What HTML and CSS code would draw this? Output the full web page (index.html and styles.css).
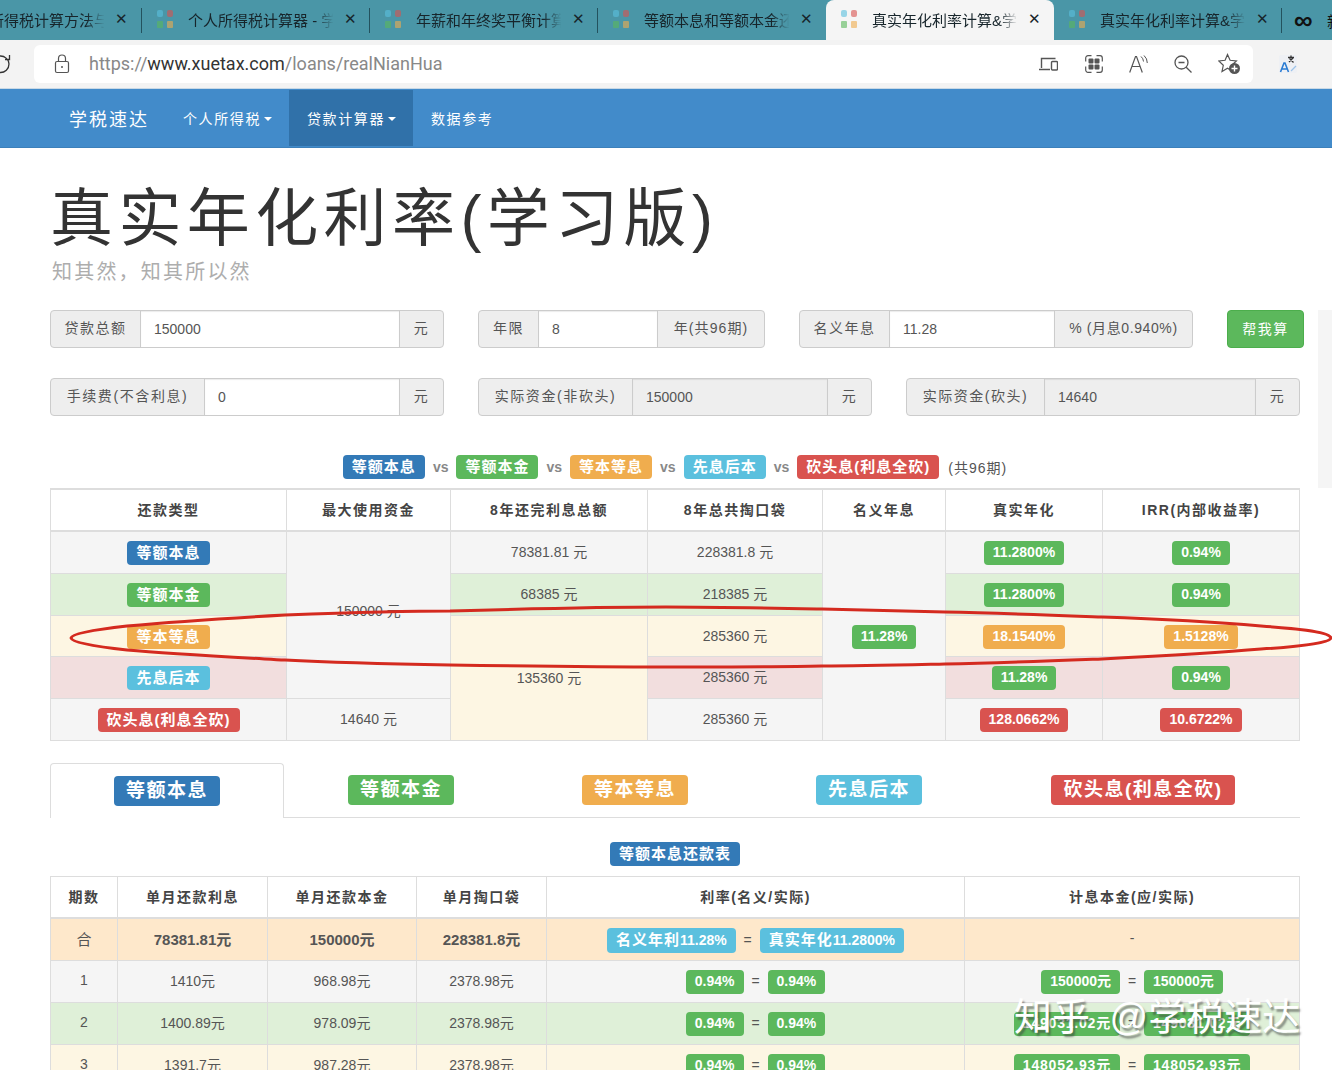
FILE: index.html
```html
<!DOCTYPE html>
<html>
<head>
    <title>真实年化利率计算&学习版 - 学税速达</title>
    <link rel="stylesheet" href="styles.css">
</head>
<body>
    <svg width="0" height="0" class="defs">
        <symbol id="fav" viewBox="0 0 20 20">
            <rect x="2" y="1" width="6" height="7" rx="2" fill="#5bc0de"/>
            <rect x="12" y="1" width="6" height="7" rx="2" fill="#d9534f"/>
            <rect x="2" y="12" width="6" height="7" rx="1" fill="#5cb85c"/>
            <rect x="12" y="12" width="6" height="7" rx="1" fill="#f0ad4e"/>
        </symbol>
    </svg>

    <div class="tabstrip">
        <div class="tab tab-first"><span class="tab-title">个人所得税计算方法与</span><span class="tab-x">✕</span></div>
        <div class="tab"><svg class="fav"><use href="#fav"/></svg><span class="tab-title">个人所得税计算器 - 学</span><span class="tab-x">✕</span></div>
        <div class="tab"><svg class="fav"><use href="#fav"/></svg><span class="tab-title">年薪和年终奖平衡计算</span><span class="tab-x">✕</span></div>
        <div class="tab tab-noline"><svg class="fav"><use href="#fav"/></svg><span class="tab-title">等额本息和等额本金还</span><span class="tab-x">✕</span></div>
        <div class="tab tab-active"><svg class="fav"><use href="#fav"/></svg><span class="tab-title">真实年化利率计算&amp;学</span><span class="tab-x">✕</span></div>
        <div class="tab"><svg class="fav"><use href="#fav"/></svg><span class="tab-title">真实年化利率计算&amp;学</span><span class="tab-x">✕</span></div>
        <div class="tab-more"><span class="infinity">∞</span><span class="tab-new">新</span></div>
    </div>

    <div class="addrbar">
        <svg class="reload" width="11" height="22" viewBox="0 0 11 22"><path d="M0 3a8.500 8.500 0 0 1 9 8a8.500 8.500 0 0 1-9 8.500M9.500 2v4.500h-4.500" fill="none" stroke="#333" stroke-width="1.300"/></svg>
        <div class="urlbox">
            <svg class="lock" width="16" height="20" viewBox="0 0 16 20"><path d="M4.500 7.500v-3a3.500 3.500 0 0 1 7 0v3" fill="none" stroke="#555" stroke-width="1.200"/><rect x="1.500" y="7.500" width="13" height="11" rx="1.500" fill="none" stroke="#555" stroke-width="1.200"/><circle cx="8" cy="13" r="1" fill="#555"/></svg>
            <span class="url"><span class="url-dim">https://</span>www.xuetax.com<span class="url-dim">/loans/realNianHua</span></span>
            <div class="url-icons">
                <svg class="icon-devices" width="19" height="14" viewBox="0 0 19 14"><path d="M2.500 11V1.500h14M0 12.500h11" fill="none" stroke="#555" stroke-width="1.400"/><rect x="12.500" y="4.500" width="6" height="8.500" rx="1" fill="none" stroke="#555" stroke-width="1.400"/></svg>
                <svg width="18" height="18" viewBox="0 0 18 18"><path d="M0.700 6.500V3a2.300 2.300 0 0 1 2.300-2.300h3.500M11.500 0.700H15a2.300 2.300 0 0 1 2.300 2.300v3.500M17.300 11.500V15a2.300 2.300 0 0 1-2.300 2.300h-3.500M6.500 17.300H3a2.300 2.300 0 0 1-2.300-2.300v-3.500" fill="none" stroke="#555" stroke-width="1.200"/><rect x="3.500" y="3.500" width="5" height="5" rx="1" fill="#555"/><rect x="9.500" y="3.500" width="5" height="5" rx="1" fill="#555"/><rect x="3.500" y="9.500" width="5" height="5" rx="1" fill="#555"/><rect x="9.500" y="9.500" width="5" height="5" rx="1" fill="#555"/></svg>
                <svg width="19" height="18" viewBox="0 0 19 18"><path d="M0.700 17.500L6.500 1.500h1L13.300 17.500M3 11.500h8" fill="none" stroke="#555" stroke-width="1.200"/><path d="M12 1.500a7 7 0 0 1 2.500 5M15 0.500a10 10 0 0 1 3.300 7.500" fill="none" stroke="#555" stroke-width="1"/></svg>
                <svg width="18" height="18" viewBox="0 0 18 18"><circle cx="7.500" cy="7.500" r="6.500" fill="none" stroke="#555" stroke-width="1.300"/><path d="M4.500 7.500h6M12.200 12.200l5.300 5.300" fill="none" stroke="#555" stroke-width="1.300"/></svg>
                <svg width="22" height="21" viewBox="0 0 22 21"><path d="M9.500 1.500l2.600 5.800 6.300.7-4.700 4.300 1.300 6.200-5.500-3.200-5.500 3.200 1.300-6.200L0.800 8l6.300-.7z" fill="none" stroke="#555" stroke-width="1.200"/><circle cx="16.500" cy="15.500" r="5.500" fill="#555"/><path d="M16.500 12.500v6M13.500 15.500h6" stroke="#fff" stroke-width="1.400"/></svg>
            </div>
        </div>
        <svg class="translate" width="18" height="20" viewBox="0 0 18 20"><rect x="0" y="1" width="18" height="18" rx="2" fill="#eef0f4"/><path d="M1.500 18L5 9h1L9.500 18M3 15h5" fill="none" stroke="#2b7cd3" stroke-width="1.600"/><path d="M9 3.500h6M12 1.500v2M10 8l4-4M10.500 4.500l4 4" fill="none" stroke="#333" stroke-width="1.300"/><path d="M12 17l5-5" stroke="#9cc3ea" stroke-width="1.300"/></svg>
    </div>

    <nav class="navbar">
        <a class="brand">学税速达</a>
        <a class="nav-item nav-first">个人所得税<i class="caret"></i></a>
        <a class="nav-item nav-active">贷款计算器<i class="caret"></i></a>
        <a class="nav-item">数据参考</a>
    </nav>

    <div class="container">
        <h1 class="title">真实年化利率(学习版)</h1>
        <p class="subtitle">知其然，知其所以然</p>

        <div class="input-row">
            <div class="input-group g-wide">
                <span class="addon a-91">贷款总额</span><span class="field">150000</span><span class="addon a-45">元</span>
            </div>
            <div class="input-group g-year">
                <span class="addon a-60">年限</span><span class="field">8</span><span class="addon a-108">年(共96期)</span>
            </div>
            <div class="input-group g-wide">
                <span class="addon a-91">名义年息</span><span class="field">11.28</span><span class="addon a-139">% (月息0.940%)</span>
            </div>
            <button class="calc-btn">帮我算</button>
        </div>
        <div class="input-row row-two">
            <div class="input-group g-wide">
                <span class="addon a-154">手续费(不含利息)</span><span class="field">0</span><span class="addon a-45">元</span>
            </div>
            <div class="input-group g-wide">
                <span class="addon a-154">实际资金(非砍头)</span><span class="field field-off">150000</span><span class="addon a-45">元</span>
            </div>
            <div class="input-group g-wide">
                <span class="addon a-138">实际资金(砍头)</span><span class="field field-off">14640</span><span class="addon a-45">元</span>
            </div>
        </div>

        <div class="legend">
            <span class="label blue">等额本息</span><b>vs</b>
            <span class="label green">等额本金</span><b>vs</b>
            <span class="label orange">等本等息</span><b>vs</b>
            <span class="label cyan">先息后本</span><b>vs</b>
            <span class="label red">砍头息(利息全砍)</span>
            <span class="legend-note">(共96期)</span>
        </div>

        <div class="compare">
            <table class="grid grid-top">
                <colgroup>
                    <col class="c236"><col class="c164"><col class="c197"><col class="c175"><col class="c123"><col class="c157"><col>
                </colgroup>
                <thead>
                    <tr><th>还款类型</th><th>最大使用资金</th><th>8年还完利息总额</th><th>8年总共掏口袋</th><th>名义年息</th><th>真实年化</th><th>IRR(内部收益率)</th></tr>
                </thead>
                <tbody>
                    <tr class="r-gray">
                        <td><span class="label blue">等额本息</span></td>
                        <td rowspan="4" class="bg-gray cell-up">150000 元</td>
                        <td>78381.81 元</td>
                        <td>228381.8 元</td>
                        <td rowspan="5" class="bg-gray"><span class="label green num">11.28%</span></td>
                        <td><span class="label green num">11.2800%</span></td>
                        <td><span class="label green num">0.94%</span></td>
                    </tr>
                    <tr class="r-green">
                        <td><span class="label green">等额本金</span></td>
                        <td>68385 元</td>
                        <td>218385 元</td>
                        <td><span class="label green num">11.2800%</span></td>
                        <td><span class="label green num">0.94%</span></td>
                    </tr>
                    <tr class="r-yellow">
                        <td><span class="label orange">等本等息</span></td>
                        <td rowspan="3" class="bg-yellow">135360 元</td>
                        <td>285360 元</td>
                        <td><span class="label orange num">18.1540%</span></td>
                        <td><span class="label orange num">1.5128%</span></td>
                    </tr>
                    <tr class="r-red">
                        <td><span class="label cyan">先息后本</span></td>
                        <td>285360 元</td>
                        <td><span class="label green num">11.28%</span></td>
                        <td><span class="label green num">0.94%</span></td>
                    </tr>
                    <tr class="r-gray">
                        <td><span class="label red">砍头息(利息全砍)</span></td>
                        <td>14640 元</td>
                        <td>285360 元</td>
                        <td><span class="label red num">128.0662%</span></td>
                        <td><span class="label red num">10.6722%</span></td>
                    </tr>
                </tbody>
            </table>
            <!-- hand drawn mark on top of the table -->
            <svg class="scribble" width="1332" height="80" viewBox="0 0 1332 80">
                <path d="M71 40C72 35 100 31 127 28C180 23 230 20 285 17C340 15 400 13 450 13C520 11 590 9 666 9C720 9 770 10 822 11C870 12 910 13 945 14C1000 15 1050 17 1102 19C1160 21 1215 24 1261 28C1290 30 1330 33 1331 40C1330 45 1295 49 1261 51C1215 55 1160 58 1102 61C1050 63 1000 65 945 66C900 67 860 68 822 68C780 69 720 69 666 69C590 69 520 68 450 67C390 66 340 65 285 62C230 59 170 56 127 52C100 49 72 45 71 40Z" fill="none" stroke="#d42a1f" stroke-width="3"/>
            </svg>
        </div>

        <div class="big-tabs">
            <div class="big-tab big-active"><span class="label blue">等额本息</span></div>
            <div class="big-tab"><span class="label green">等额本金</span></div>
            <div class="big-tab"><span class="label orange">等本等息</span></div>
            <div class="big-tab"><span class="label cyan">先息后本</span></div>
            <div class="big-tab"><span class="label red">砍头息(利息全砍)</span></div>
        </div>

        <div class="table-title"><span class="label blue">等额本息还款表</span></div>

        <table class="grid grid-bottom">
            <colgroup>
                <col class="c67"><col class="c150"><col class="c149"><col class="c130"><col class="c418"><col>
            </colgroup>
            <thead>
                <tr><th>期数</th><th>单月还款利息</th><th>单月还款本金</th><th>单月掏口袋</th><th>利率(名义/实际)</th><th>计息本金(应/实际)</th></tr>
            </thead>
            <tbody>
                <tr class="r-sum">
                    <td class="strong-cjk">合</td>
                    <td class="strong">78381.81元</td>
                    <td class="strong">150000元</td>
                    <td class="strong">228381.8元</td>
                    <td><span class="label cyan">名义年利<span class="digits">11.28%</span></span><i class="eq">=</i><span class="label cyan">真实年化<span class="digits">11.2800%</span></span></td>
                    <td>-</td>
                </tr>
                <tr class="r-gray">
                    <td>1</td><td>1410元</td><td>968.98元</td><td>2378.98元</td>
                    <td><span class="label green num">0.94%</span><i class="eq">=</i><span class="label green num">0.94%</span></td>
                    <td><span class="label green num">150000元</span><i class="eq">=</i><span class="label green num">150000元</span></td>
                </tr>
                <tr class="r-green">
                    <td>2</td><td>1400.89元</td><td>978.09元</td><td>2378.98元</td>
                    <td><span class="label green num">0.94%</span><i class="eq">=</i><span class="label green num">0.94%</span></td>
                    <td><span class="label green num wide">149031.02元</span><i class="eq">=</i><span class="label green num wide">149031.02元</span></td>
                </tr>
                <tr class="r-yellow">
                    <td>3</td><td>1391.7元</td><td>987.28元</td><td>2378.98元</td>
                    <td><span class="label green num">0.94%</span><i class="eq">=</i><span class="label green num">0.94%</span></td>
                    <td><span class="label green num wide">148052.93元</span><i class="eq">=</i><span class="label green num wide">148052.93元</span></td>
                </tr>
            </tbody>
        </table>
    </div>

    <div class="scroll-thumb"></div>
    <div class="watermark">知乎 @学税速达</div>
</body>
</html>
```

FILE: styles.css
```css
html, body {
    margin: 0;
    height: 1070px;
    overflow: hidden;
}
body {
    position: relative;
    font-family: "Liberation Sans", "Noto Sans CJK SC", sans-serif;
    font-size: 14px;
    color: #333;
    background: #fff;
}
.defs {
    position: absolute;
}

/* browser chrome */
.tabstrip {
    display: flex;
    height: 40px;
    background: #4a96a7;
    overflow: hidden;
}
.tab {
    flex: none;
    box-sizing: border-box;
    width: 228px;
    height: 40px;
    display: flex;
    align-items: center;
    padding: 0 0 2px 13px;
    position: relative;
    color: #17252b;
    font-size: 15px;
}
.tab::after {
    content: "";
    position: absolute;
    right: 0;
    top: 8px;
    height: 25px;
    width: 1px;
    background: #23525e;
}
.tab-first {
    margin-left: -86px;
    padding-left: 45px;
}
.tab-noline::after, .tab-active::after {
    display: none;
}
.tab-active {
    background: #f5f5f5;
    border-radius: 8px 8px 0 0;
}
.fav {
    width: 20px;
    height: 20px;
    flex: none;
    margin-right: 13px;
    opacity: .6;
}
.tab-title {
    width: 150px;
    flex: none;
    white-space: nowrap;
    overflow: hidden;
    -webkit-mask-image: linear-gradient(to right, #000 85%, transparent 97%);
    mask-image: linear-gradient(to right, #000 85%, transparent 97%);
}
.tab-x {
    margin-left: 5px;
    width: 14px;
    font-size: 15px;
    text-align: center;
}
.tab-more {
    flex: none;
    display: flex;
    align-items: center;
    padding-left: 12px;
    color: #111;
}
.infinity {
    font-size: 26px;
    font-weight: bold;
    width: 22px;
    line-height: 36px;
}
.tab-new {
    font-size: 15px;
    margin-left: 11px;
}
.addrbar {
    display: flex;
    align-items: center;
    height: 49px;
    padding-bottom: 1px;
    background: #f3f3f3;
    box-sizing: border-box;
    border-bottom: 1px solid #c9d9e6;
}
.reload {
    flex: none;
    width: 11px;
    margin-right: 23px;
}
.urlbox {
    width: 1219px;
    height: 38px;
    flex: none;
    box-sizing: border-box;
    background: #fff;
    border-radius: 6px;
    display: flex;
    align-items: center;
    padding: 0 13px 0 20px;
}
.url {
    margin-left: 19px;
    font-family: Roboto, sans-serif;
    font-size: 18px;
    color: #333;
}
.url-dim {
    color: #888;
}
.url-icons {
    margin-left: auto;
    display: flex;
    align-items: center;
    gap: 26px;
}
.icon-devices {
    margin-right: 1px;
}
.translate {
    margin-left: 26px;
    flex: none;
}

/* site nav */
.navbar {
    display: flex;
    align-items: center;
    height: 59px;
    padding: 0 0 1px 69px;
    background: #428bca;
    color: #fff;
    border-bottom: 1px solid #3c80ba;
    box-sizing: border-box;
}
.brand {
    width: 96px;
    font-size: 18px;
    letter-spacing: 2px;
}
.nav-item {
    height: 56px;
    display: flex;
    align-items: center;
    padding: 0 18px;
    letter-spacing: 1.600px;
}
.nav-first {
    padding-right: 17px;
}
.nav-active {
    background: #3071a9;
    padding-right: 17px;
}
.caret {
    width: 0;
    height: 0;
    margin-left: 3px;
    margin-top: 2px;
    border-top: 4px solid #fff;
    border-left: 4.500px solid transparent;
    border-right: 4.500px solid transparent;
}

/* page */
.container {
    padding: 0 0 0 50px;
    position: relative;
}
.title {
    margin: 31px 0 0;
    font-size: 63px;
    line-height: 79px;
    font-weight: normal;
    letter-spacing: 5.400px;
}
.subtitle {
    margin: 0;
    padding-left: 2px;
    font-size: 20px;
    line-height: 28px;
    letter-spacing: 2.200px;
    color: #adadad;
}
.input-row {
    display: flex;
    gap: 34px;
    margin-top: 24px;
}
.row-two {
    margin-top: 30px;
}
.input-group {
    flex: none;
    display: flex;
    height: 38px;
    box-sizing: border-box;
    border: 1px solid #ccc;
    border-radius: 4px;
    overflow: hidden;
    background: #eee;
    line-height: 36px;
}
.g-wide {
    width: 394px;
}
.g-year {
    width: 287px;
}
.addon {
    flex: none;
    box-sizing: border-box;
    text-align: center;
    letter-spacing: 1.500px;
    color: #555;
    line-height: 34px;
}
.a-45 { width: 44px; border-left: 1px solid #ccc; }
.a-60 { width: 60px; border-right: 1px solid #ccc; }
.a-91 { width: 90px; border-right: 1px solid #ccc; }
.a-108 { width: 107px; border-left: 1px solid #ccc; letter-spacing: 1.100px; }
.a-139 { width: 138px; border-left: 1px solid #ccc; letter-spacing: .6px; }
.a-138 { width: 138px; border-right: 1px solid #ccc; }
.a-154 { width: 154px; border-right: 1px solid #ccc; letter-spacing: 1.600px; }
.field {
    flex: 1;
    padding-left: 13px;
    background: #fff;
    box-shadow: inset 0 1px 1px rgba(0,0,0,.08);
    color: #555;
}
.field-off {
    background: #eee;
}
.calc-btn {
    flex: none;
    width: 77px;
    height: 38px;
    border: 1px solid #4cae4c;
    border-radius: 4px;
    background: #5cb85c;
    color: #fff;
    font-family: inherit;
    font-size: 14px;
    letter-spacing: 1.500px;
    padding: 0 0 3px;
}
.legend {
    margin-top: 39px;
    height: 24px;
    display: flex;
    align-items: center;
    justify-content: center;
    gap: 8px;
    color: #777;
    width: 1250px;
}
.legend b {
    font-size: 14px;
    color: #888;
}
.legend-note {
    margin-left: 1px;
    color: #555;
    letter-spacing: 1px;
}

/* labels */
.label {
    display: inline-block;
    padding: 4px 9px 5px;
    font-size: 15px;
    line-height: 15px;
    font-weight: bold;
    letter-spacing: 1px;
    color: #fff;
    border-radius: 4px;
    white-space: nowrap;
}
.label.num {
    font-size: 14px;
    line-height: 15px;
    letter-spacing: 0;
}
.label.wide {
    letter-spacing: .8px;
}
.grid .label {
    margin-top: 4px;
}
.digits {
    font-size: 14px;
    letter-spacing: 0;
}
.blue { background: #337ab7; }
.green { background: #5cb85c; }
.orange { background: #f0ad4e; }
.cyan { background: #5bc0de; }
.red { background: #d9534f; }

/* tables */
.grid {
    width: 1250px;
    table-layout: fixed;
    border-collapse: collapse;
    text-align: center;
    color: #555;
}
.grid th, .grid td {
    height: 42px;
    padding: 0 0 2px;
    border: 1px solid #ddd;
    box-sizing: border-box;
}
.grid th {
    border-bottom-width: 2px;
    color: #444;
    letter-spacing: 1.500px;
}
.grid td.cell-up {
    padding-bottom: 10px;
}
.compare {
    position: relative;
    margin-top: 9px;
}
.grid-top thead th {
    border-top-width: 2px;
}
.grid-top .r-yellow td {
    height: 41px;
}
.c236 { width: 236px; }
.c164 { width: 164px; }
.c197 { width: 197px; }
.c175 { width: 175px; }
.c123 { width: 123px; }
.c157 { width: 157px; }
.c67 { width: 67px; }
.c150 { width: 150px; }
.c149 { width: 149px; }
.c130 { width: 130px; }
.c418 { width: 418px; }
.r-gray td, .bg-gray { background: #f5f5f5; }
.r-green td { background: #dff0d8; }
.r-yellow td, td.bg-yellow { background: #fdf6e3; }
.r-red td { background: #f2dede; }
.r-sum td { background: #fee8cb; }
.scribble {
    position: absolute;
    left: -50px;
    top: 110px;
}
.big-tabs {
    display: grid;
    grid-template-columns: 234px 234px 234px 234px 1fr;
    width: 1250px;
    height: 54px;
    margin-top: 22px;
    border-bottom: 1px solid #ddd;
}
.big-tab {
    display: flex;
    justify-content: center;
    padding-top: 12px;
    height: 54px;
    box-sizing: border-box;
}
.big-active {
    background: #fff;
    height: 55px;
    border: 1px solid #ddd;
    border-bottom: none;
    border-radius: 4px 4px 0 0;
}
.big-tab .label {
    height: 30px;
    box-sizing: border-box;
    padding: 5px 12px;
    font-size: 19px;
    line-height: 20px;
    letter-spacing: 1.500px;
}
.table-title {
    width: 1250px;
    text-align: center;
    margin-top: 24px;
}
.grid-bottom {
    margin-top: 10px;
}
.grid-bottom td.strong {
    font-weight: bold;
    font-size: 15px;
}
.grid-bottom td.strong-cjk {
    font-size: 15px;
}
.eq {
    font-style: normal;
    display: inline-block;
    width: 24px;
}
.scroll-thumb {
    position: absolute;
    left: 1318px;
    top: 310px;
    width: 14px;
    height: 178px;
    background: #f5f5f5;
}
.watermark {
    position: absolute;
    left: 1014px;
    top: 995px;
    font-size: 38px;
    line-height: 44px;
    word-spacing: 9px;
    white-space: nowrap;
    color: #fff;
    text-shadow: 2px 3px 2px rgba(60,60,60,.55);
}
```
